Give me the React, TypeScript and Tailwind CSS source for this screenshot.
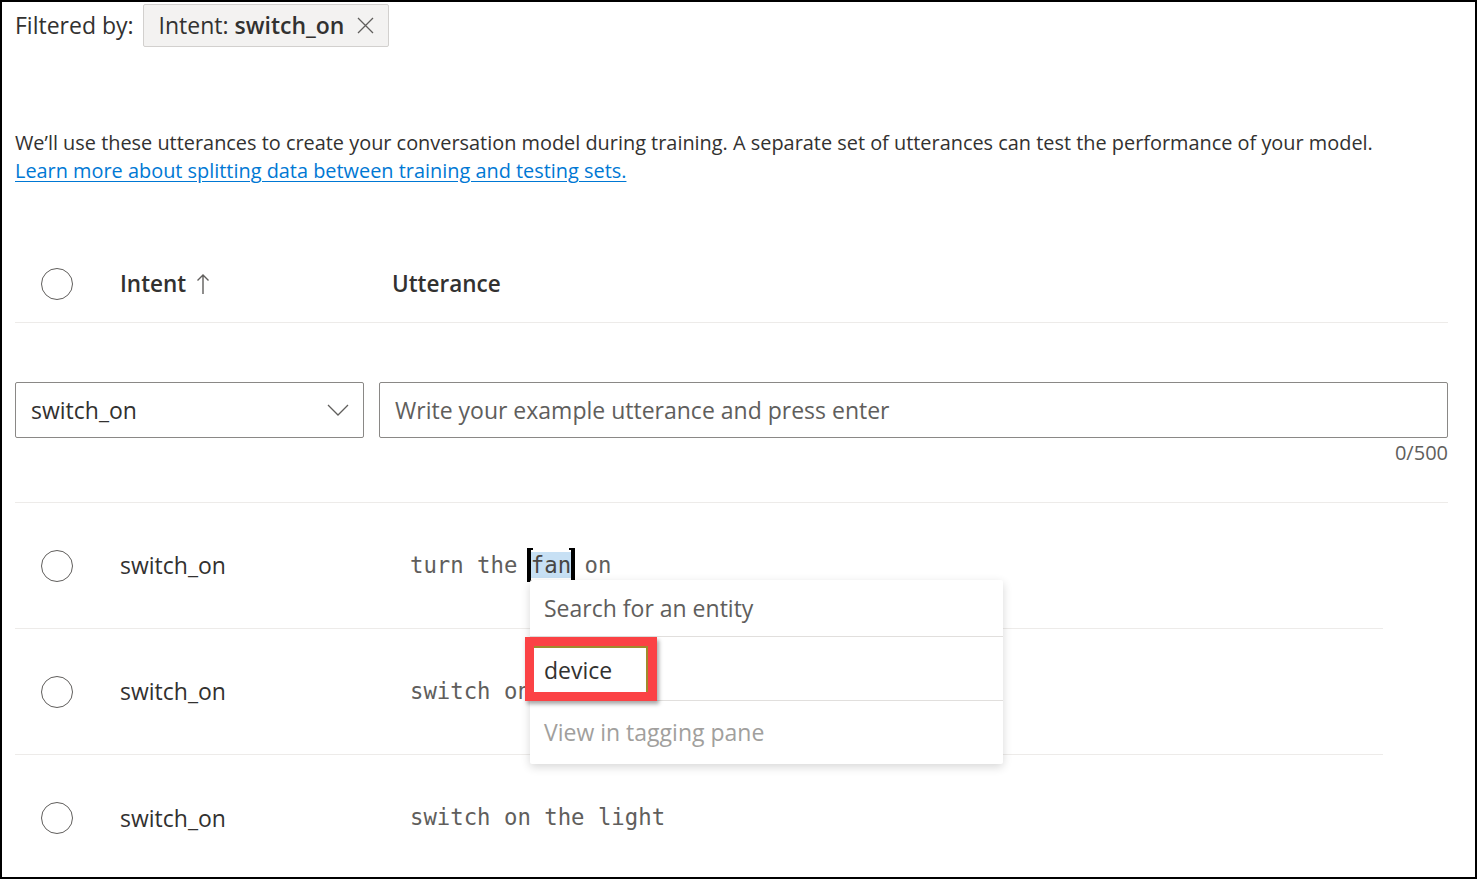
import React from 'react';

const sans = "font-['Open_Sans','Noto_Sans',sans-serif]";
const mono = "font-['DejaVu_Sans_Mono','Liberation_Mono',monospace]";

function Circle() {
    return <div className="w-8 h-8 rounded-full border-[1.5px] border-[#605e5c] shrink-0" />;
}

function Bracket({ side }: { side: 'left' | 'right' }) {
    return (
        <span
            className={`absolute top-[-4px] bottom-[-4px] w-[6px] border-y-[2px] border-black ${
                side === 'left' ? 'left-[-4px] border-l-[4px]' : 'right-[-4px] border-r-[4px]'
            }`}
        />
    );
}

function EntityMenu() {
    return (
        <div className={`absolute left-[515px] top-[77px] w-[473px] bg-white rounded-[2px] shadow-[0_3px_10px_rgba(0,0,0,0.16)] z-10 ${sans}`}>
            <div className="h-[57px] flex items-center px-[14px] text-[23px] text-[#605e5c] border-b border-[#e1dfdd]">
                Search for an entity
            </div>
            <div className="relative h-[64px] flex items-center px-[14px] pt-[3px] text-[23px] text-[#323130] border-b border-[#e1dfdd]">
                device
                <div className="absolute left-[-5px] top-[0px] w-[132px] h-[64px] border-[9px] border-[#fb4245] shadow-[2px_3px_4px_rgba(0,0,0,0.35)]">
                    <div className="w-full h-full border-t-[2px] border-r-[2px] border-[#a08b2c]" />
                </div>
            </div>
            <div className="h-[63px] flex items-center px-[14px] text-[23px] text-[#a19f9d]">
                View in tagging pane
            </div>
        </div>
    );
}

function Row({ label, children, last, menu }: { label: string; children: React.ReactNode; last?: boolean; menu?: boolean }) {
    return (
        <div className={`relative h-[126px] flex items-center mr-[65px] ${last ? '' : 'border-b border-[#edebe9]'}`}>
            <div className="w-[105px] pl-[26px]">
                <Circle />
            </div>
            <div className={`w-[290px] text-[23px] text-[#323130] ${sans}`}>{label}</div>
            <div className={`text-[22.3px] text-[#605e5c] whitespace-pre ${mono}`}>{children}</div>
            {menu && <EntityMenu />}
        </div>
    );
}

export default function App() {
    return (
        <div className={`w-[1477px] h-[879px] border-2 border-black bg-white overflow-hidden ${sans}`}>
            <div className="pl-[13px] pr-[27px]">
                {/* filter */}
                <div className="flex items-center pt-[2px] h-[45px]">
                    <span className="text-[23px] text-[#323130]">Filtered by:</span>
                    <div className="ml-[9px] h-[43px] pl-[15px] pr-[14px] flex items-center gap-[13px] bg-[#f3f2f1] border border-[#d2d0ce] rounded-[2px] text-[23px] text-[#323130]">
                        <span>
                            Intent: <span className="font-semibold">switch_on</span>
                        </span>
                        <svg width="17" height="17" viewBox="0 0 17 17" className="text-[#605e5c]">
                            <path d="M1 1L16 16M16 1L1 16" stroke="currentColor" strokeWidth="1.3" />
                        </svg>
                    </div>
                </div>

                {/* description */}
                <div className="mt-[82px] text-[19.9px] leading-[28px] text-[#323130]">
                    <p>
                        We’ll use these utterances to create your conversation model during training. A separate set of utterances can test the performance of your model.
                    </p>
                    <a href="#" className="text-[#0078d4] underline underline-offset-[3px]">
                        Learn more about splitting data between training and testing sets.
                    </a>
                </div>

                {/* header */}
                <div className="mt-[60px] h-[78px] flex items-center border-b border-[#edebe9]">
                    <div className="w-[105px] pl-[26px]">
                        <Circle />
                    </div>
                    <div className="w-[272px] flex items-center gap-[10px] text-[22.5px] font-semibold text-[#323130]">
                        Intent
                        <svg width="14" height="22" viewBox="0 0 14 22" className="text-[#605e5c]">
                            <path d="M7 21V2M1.5 7.5L7 2l5.5 5.5" fill="none" stroke="currentColor" strokeWidth="1.4" />
                        </svg>
                    </div>
                    <div className="text-[22.5px] font-semibold text-[#323130]">Utterance</div>
                </div>

                {/* input */}
                <div className="mt-[59px] flex gap-[15px]">
                    <div className="w-[349px] h-[56px] flex items-center justify-between pl-[15px] pr-[14px] border border-[#8a8886] rounded-[2px] text-[23px] text-[#323130]">
                        switch_on
                        <svg width="22" height="12" viewBox="0 0 22 12" className="text-[#605e5c]">
                            <path d="M1 1l10 10L21 1" fill="none" stroke="currentColor" strokeWidth="1.3" />
                        </svg>
                    </div>
                    <div className="flex-1 h-[56px] flex items-center px-[15px] border border-[#8a8886] rounded-[2px] text-[23px] text-[#605e5c]">
                        Write your example utterance and press enter
                    </div>
                </div>
                <div className="mt-[3px] text-right text-[20px] leading-[24px] text-[#605e5c]">0/500</div>

                {/* rows */}
                <div className="mt-[37px] border-t border-[#edebe9]">
                    <Row label="switch_on" menu>
                        {'turn the '}
                        <span className="relative bg-[#c7e0f4] text-[#484644]">
                            fan
                            <Bracket side="left" />
                            <Bracket side="right" />
                        </span>
                        {' on'}
                    </Row>
                    <Row label="switch_on">switch on the light</Row>
                    <Row label="switch_on" last>
                        switch on the light
                    </Row>
                </div>
            </div>
        </div>
    );
}
